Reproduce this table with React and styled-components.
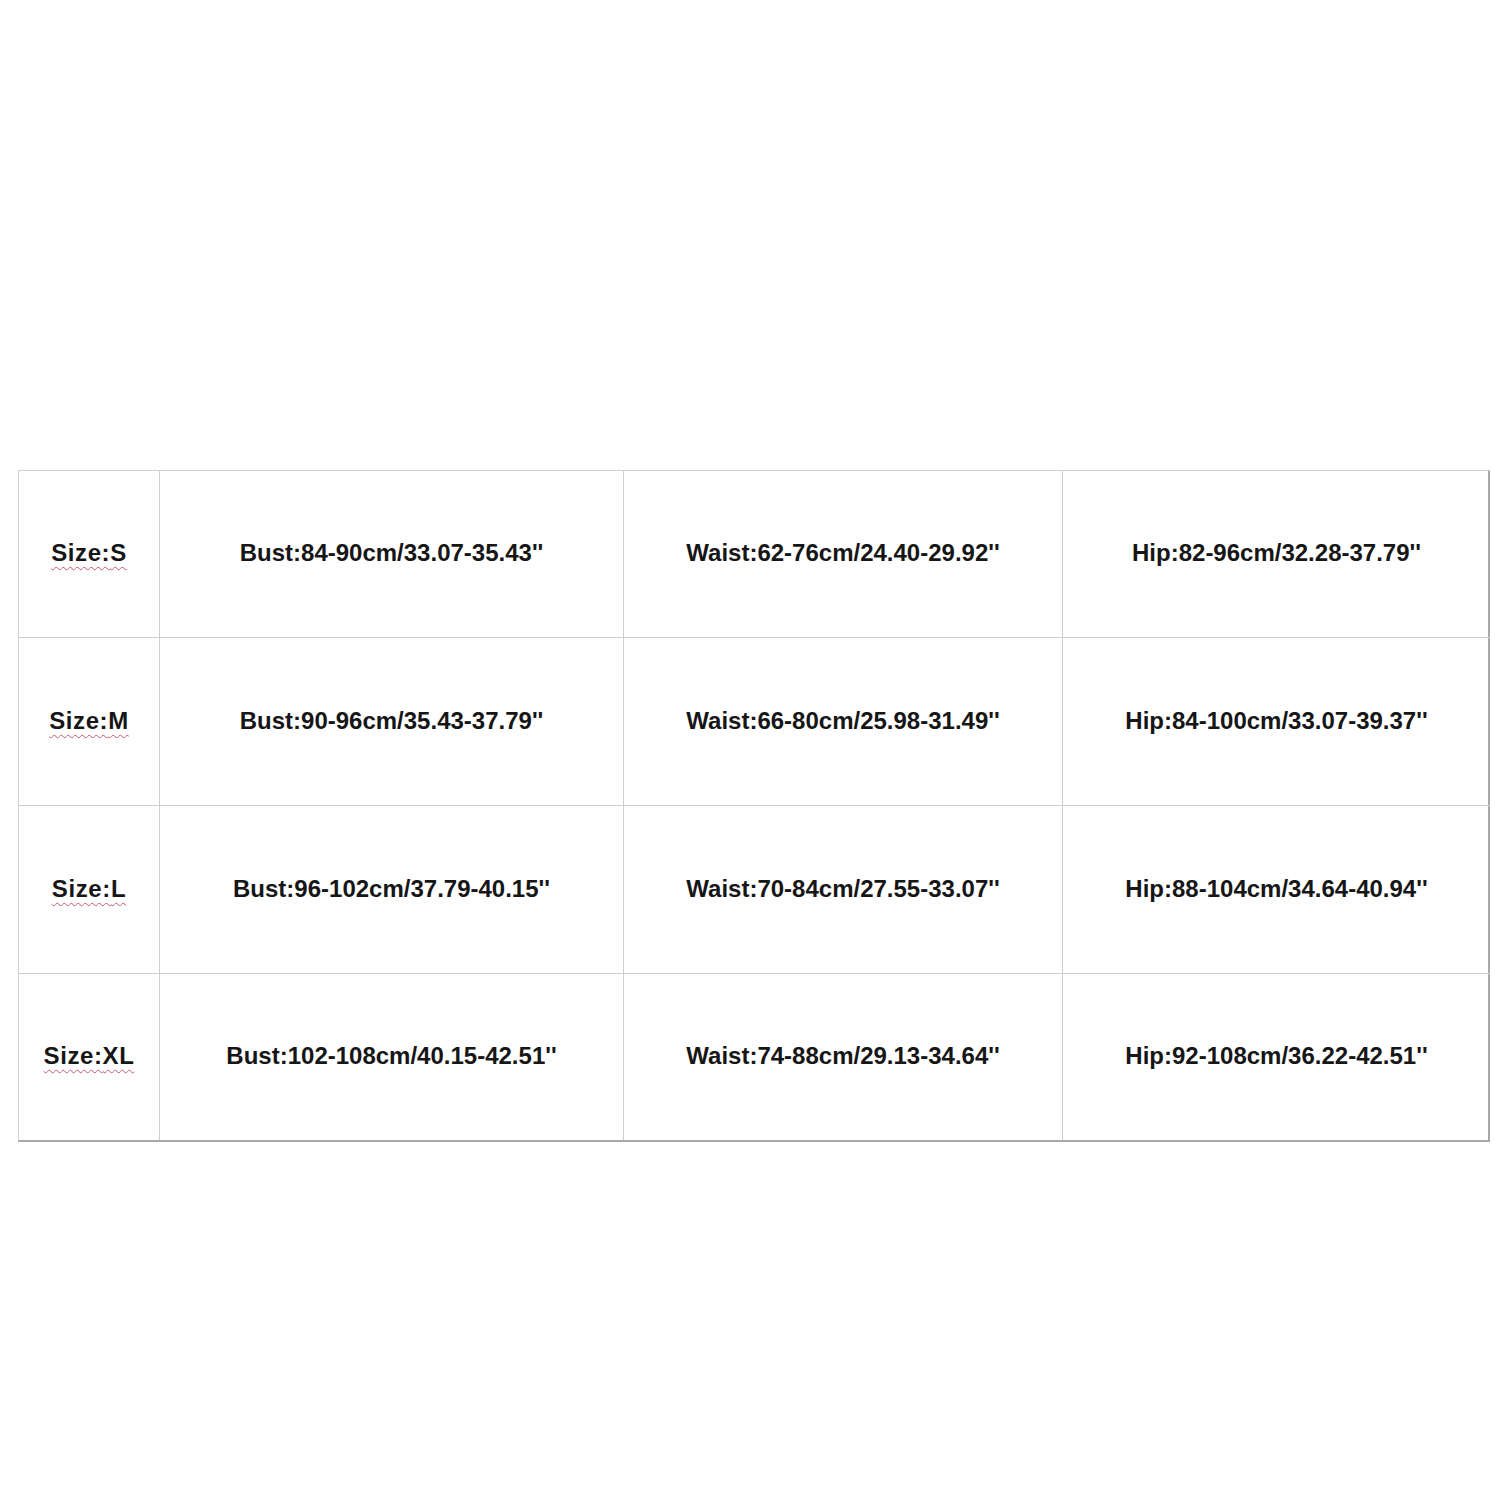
import React from "react";
import styled, { createGlobalStyle } from "styled-components";

const Global = createGlobalStyle`
  body {
    margin: 0;
    background: #fff;
    font-family: "Liberation Sans", Arial, sans-serif;
  }
`;

const Page = styled.div`
  width: 1500px;
  height: 1500px;
  padding-top: 470px;
  padding-left: 18px;
  box-sizing: border-box;
`;

const Table = styled.div`
  display: grid;
  grid-template-columns: 141px 464px 439px 427px;
  grid-template-rows: 167px 168px 168px 166px;
  width: 1472px;
  border-top: 1px solid #cfcfcf;
  border-left: 1px solid #cfcfcf;
  border-right: 2px solid #a8a8a8;
  border-bottom: 2px solid #a8a8a8;
  box-sizing: border-box;
`;

const Cell = styled.div`
  display: flex;
  align-items: center;
  justify-content: center;
  padding-bottom: 2px;
  border-right: ${(p) => (p.$last ? "none" : "1px solid #cfcfcf")};
  border-bottom: ${(p) => (p.$lastRow ? "none" : "1px solid #cfcfcf")};
  font-size: 24px;
  font-weight: bold;
  color: #161616;
  white-space: nowrap;
`;

const SizeLabel = styled.span`
  letter-spacing: 0.6px;
  text-decoration: underline wavy #c25a6a;
  text-decoration-thickness: 1px;
  text-underline-offset: 5px;
`;

const rows = [
  ["S", "Bust:84-90cm/33.07-35.43''", "Waist:62-76cm/24.40-29.92''", "Hip:82-96cm/32.28-37.79''"],
  ["M", "Bust:90-96cm/35.43-37.79''", "Waist:66-80cm/25.98-31.49''", "Hip:84-100cm/33.07-39.37''"],
  ["L", "Bust:96-102cm/37.79-40.15''", "Waist:70-84cm/27.55-33.07''", "Hip:88-104cm/34.64-40.94''"],
  ["XL", "Bust:102-108cm/40.15-42.51''", "Waist:74-88cm/29.13-34.64''", "Hip:92-108cm/36.22-42.51''"],
];

export default function App() {
  return (
    <Page>
      <Global />
      <Table>
        {rows.map((r, i) => {
          const lastRow = i === rows.length - 1;
          return (
            <React.Fragment key={i}>
              <Cell $lastRow={lastRow}>
                <SizeLabel>Size:{r[0]}</SizeLabel>
              </Cell>
              <Cell $lastRow={lastRow}>{r[1]}</Cell>
              <Cell $lastRow={lastRow}>{r[2]}</Cell>
              <Cell $lastRow={lastRow} $last>
                {r[3]}
              </Cell>
            </React.Fragment>
          );
        })}
      </Table>
    </Page>
  );
}
